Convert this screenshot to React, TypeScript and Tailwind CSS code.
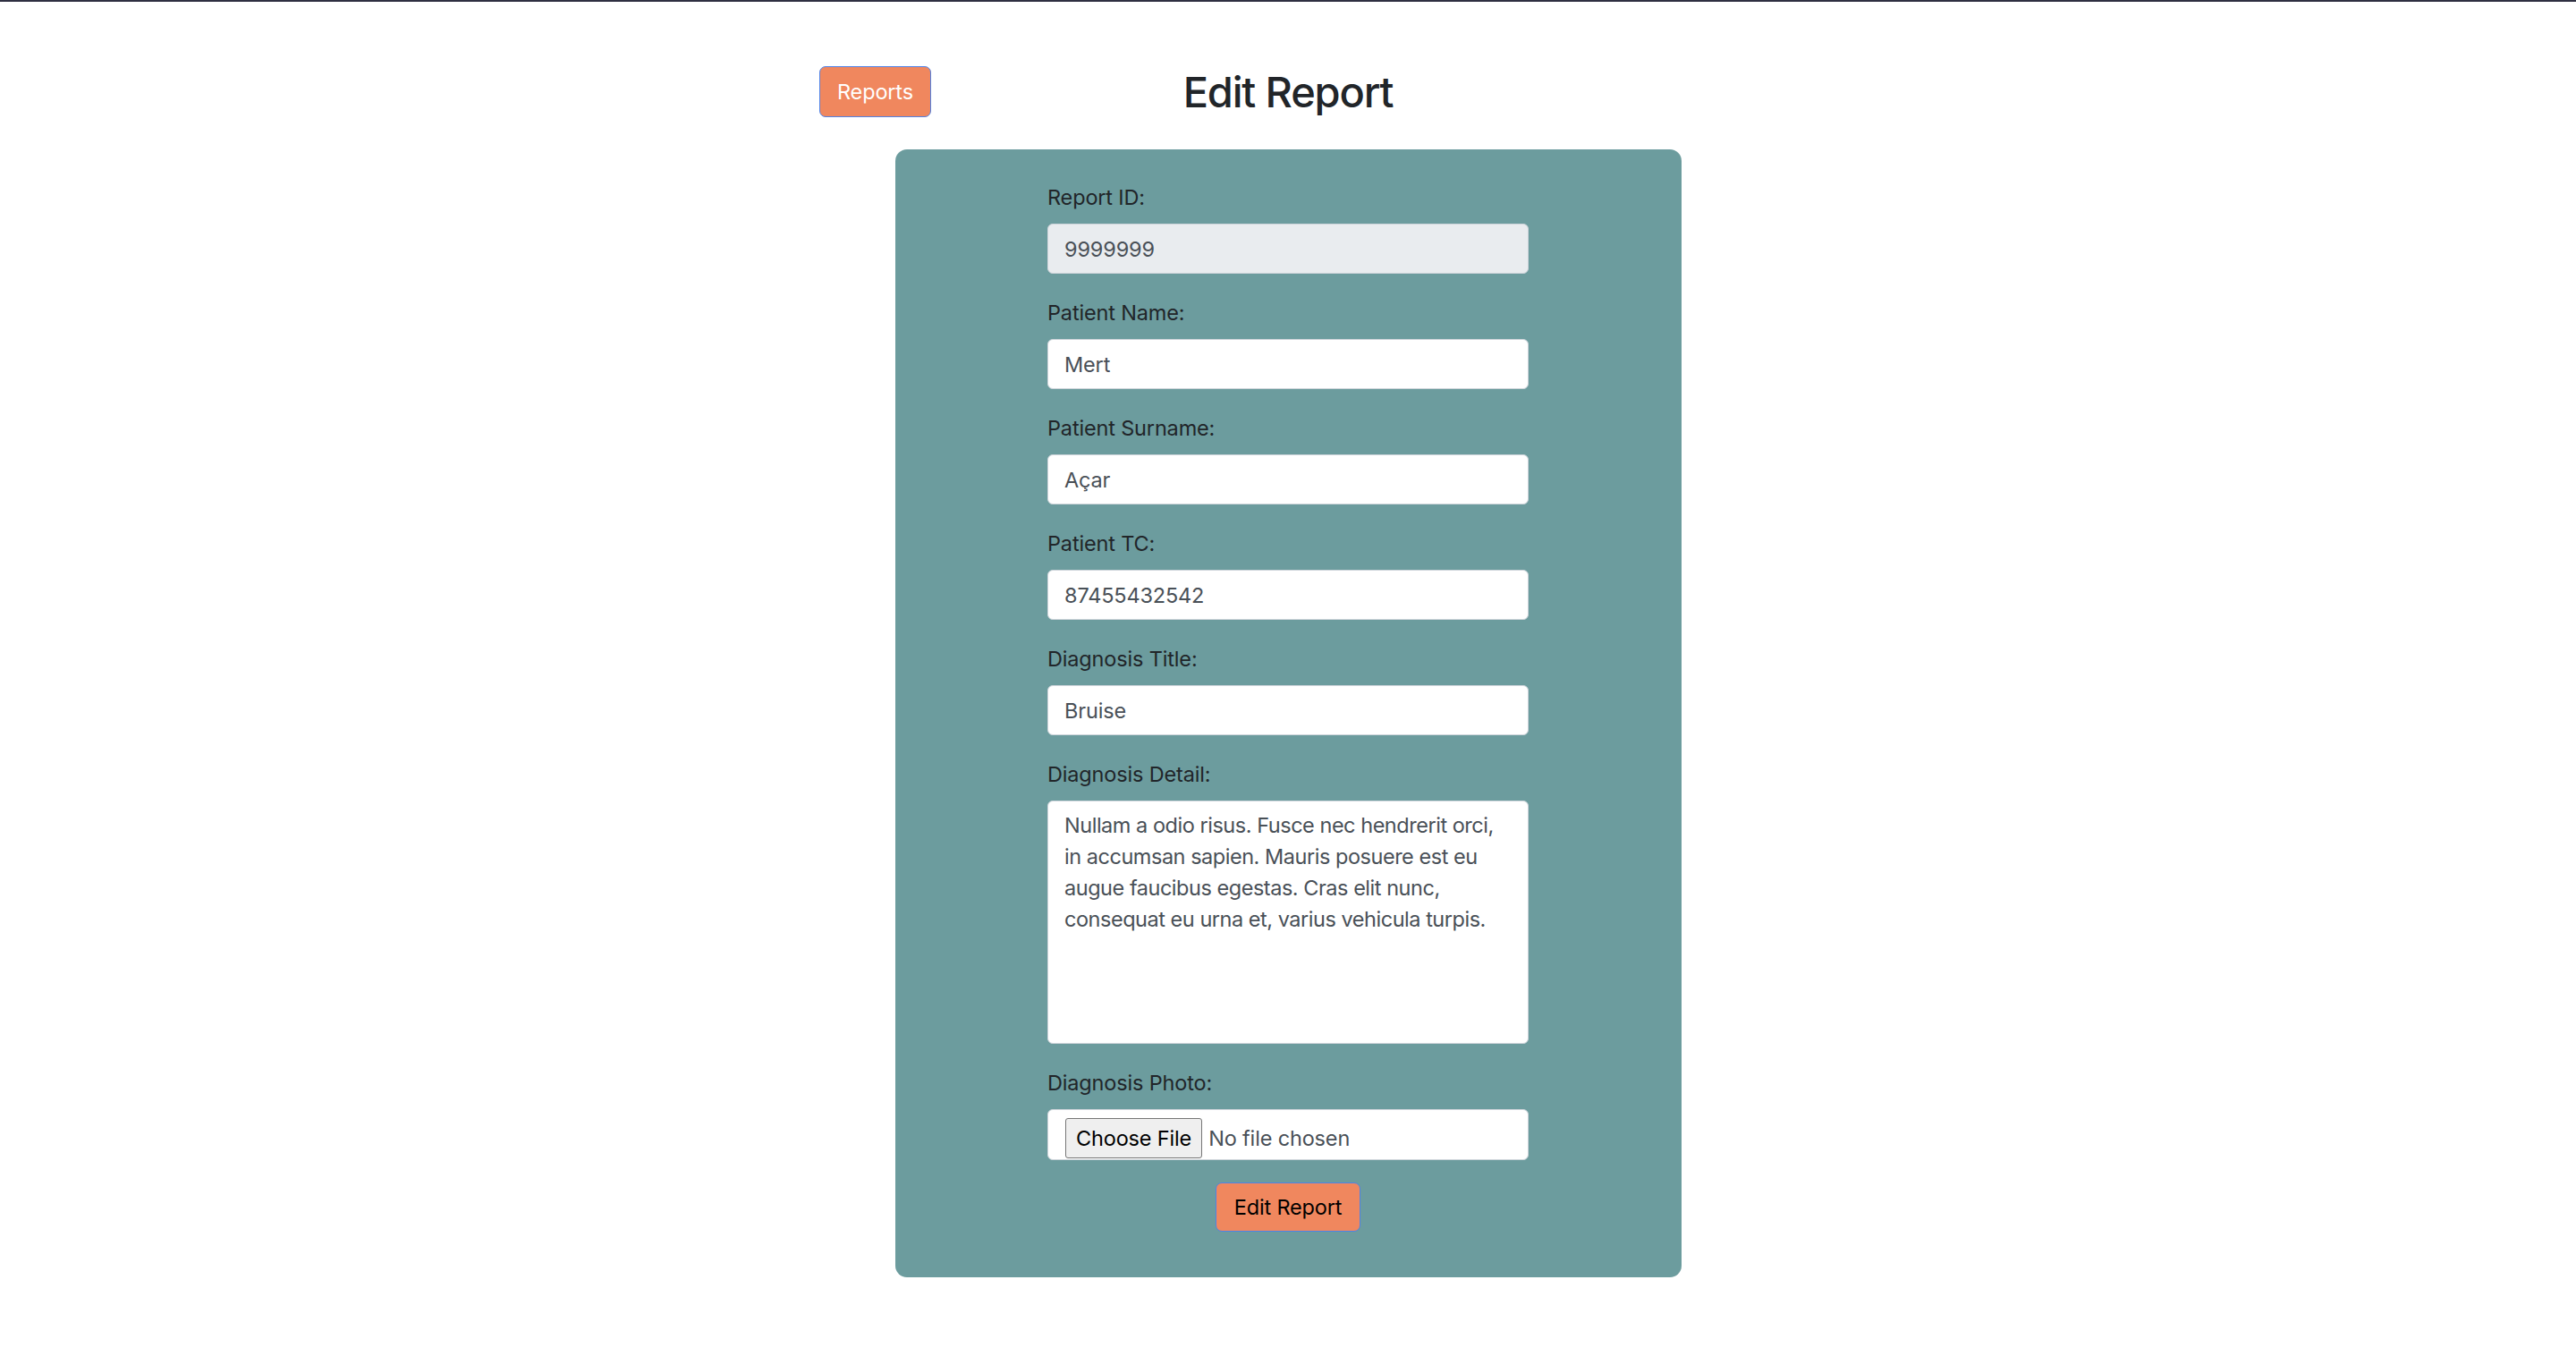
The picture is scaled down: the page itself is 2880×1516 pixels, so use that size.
import React, { useState } from "react";

const fields = [
	{ id: "reportId", label: "Report ID:", value: "9999999", disabled: true },
	{ id: "name", label: "Patient Name:", value: "Mert" },
	{ id: "surname", label: "Patient Surname:", value: "Açar" },
	{ id: "tc", label: "Patient TC:", value: "87455432542" },
	{ id: "title", label: "Diagnosis Title:", value: "Bruise" },
];

const detailText =
	"Nullam a odio risus. Fusce nec hendrerit orci,\nin accumsan sapien. Mauris posuere est eu\naugue faucibus egestas. Cras elit nunc,\nconsequat eu urna et, varius vehicula turpis.";

const App = () => {
	const [values, setValues] = useState<Record<string, string>>(
		Object.fromEntries(fields.map((f) => [f.id, f.value]))
	);
	const [detail, setDetail] = useState(detailText);

	return (
		<div
			className="min-h-screen bg-white border-t-2 border-[#2f3042] text-[#212529] tracking-[-0.01em]"
			style={{ fontFamily: "Inter, 'Noto Sans', sans-serif" }}
		>
			<div className="mx-auto w-[1048px] pt-[72px]">
				<div className="grid grid-cols-[1fr_auto_1fr] items-center">
					<button className="justify-self-start h-[57px] px-[19px] rounded-[7px] border border-[#4f82e6] bg-[#f0875e] text-white text-[23.5px] leading-[35px]">
						Reports
					</button>
					<h2 className="text-[47px] leading-[56px] font-medium text-[#212529] tracking-[-0.025em]">
						Edit Report
					</h2>
					<div />
				</div>

				<form
					className="mx-auto mt-[36px] w-[879px] rounded-[13px] bg-[#6c9c9e] pt-[36px] pb-[51px]"
					onSubmit={(e) => e.preventDefault()}
				>
					<div className="mx-auto w-[538px] text-[23.5px] leading-[35px]">
						{fields.map((f) => (
							<div key={f.id} className="mb-[26px]">
								<label htmlFor={f.id} className="block mb-[12px] text-[#212529]">
									{f.label}
								</label>
								<input
									id={f.id}
									type="text"
									disabled={f.disabled}
									value={values[f.id]}
									onChange={(e) =>
										setValues({ ...values, [f.id]: e.target.value })
									}
									className={`block w-full h-[56px] px-[18px] rounded-[6px] border border-[#ced4da] text-[#495057] outline-none ${
										f.disabled ? "bg-[#e9ecef]" : "bg-white"
									}`}
								/>
							</div>
						))}

						<div className="mb-[26px]">
							<label htmlFor="detail" className="block mb-[12px] text-[#212529]">
								Diagnosis Detail:
							</label>
							<textarea
								id="detail"
								value={detail}
								onChange={(e) => setDetail(e.target.value)}
								className="block w-full h-[272px] px-[18px] py-[9px] rounded-[6px] border border-[#ced4da] bg-white text-[#495057] tracking-[-0.02em] outline-none resize-none"
							/>
						</div>

						<div className="mb-[25px]">
							<label htmlFor="photo" className="block mb-[12px] text-[#212529]">
								Diagnosis Photo:
							</label>
							<input
								id="photo"
								type="file"
								className="block w-full h-[57px] pl-[19px] pt-[9px] rounded-[6px] border border-[#ced4da] bg-white text-[#495057] file:h-[45px] file:px-[11px] file:mr-[7px] file:bg-[#efefef] file:border file:border-solid file:border-[#767676] file:rounded-[3px] file:text-black"
							/>
						</div>

						<div className="flex justify-center">
							<button
								type="submit"
								className="h-[55px] px-[20px] rounded-[7px] border border-[#4f82e6] bg-[#f0875e] text-black"
							>
								Edit Report
							</button>
						</div>
					</div>
				</form>
			</div>
		</div>
	);
};

export default App;
